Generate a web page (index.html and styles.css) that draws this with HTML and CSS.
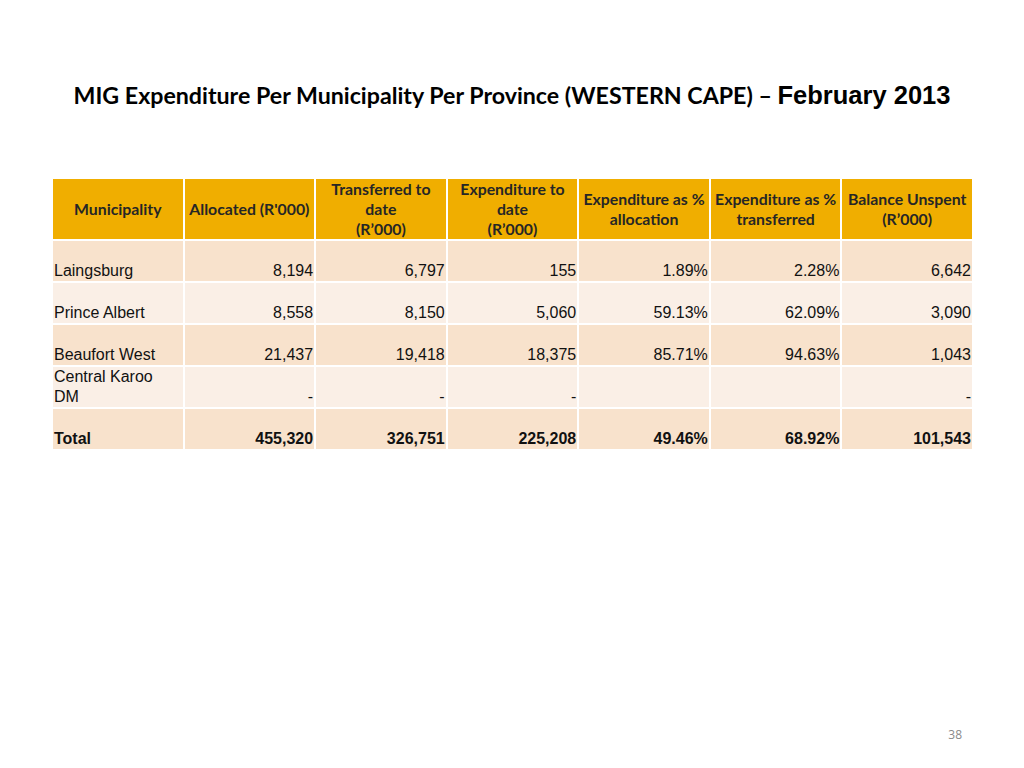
FILE: index.html
```html
<!DOCTYPE html>
<html>
<head>
<meta charset="utf-8">
<link rel="stylesheet" href="styles.css">
</head>
<body>
<div class="slide">
  <h1 class="title"><span class="t-main">MIG Expenditure Per Municipality Per Province (WESTERN CAPE) – </span><span class="t-date">February 2013</span></h1>
  <table class="data">
    <thead>
      <tr>
        <th>Municipality</th>
        <th>Allocated (R'000)</th>
        <th>Transferred to date<br>(R’000)</th>
        <th>Expenditure to date<br>(R’000)</th>
        <th>Expenditure as % allocation</th>
        <th>Expenditure as % transferred</th>
        <th>Balance Unspent (R’000)</th>
      </tr>
    </thead>
    <tbody>
      <tr class="odd">
        <td class="name">Laingsburg</td><td>8,194</td><td>6,797</td><td>155</td><td>1.89%</td><td>2.28%</td><td>6,642</td>
      </tr>
      <tr class="even">
        <td class="name">Prince Albert</td><td>8,558</td><td>8,150</td><td>5,060</td><td>59.13%</td><td>62.09%</td><td>3,090</td>
      </tr>
      <tr class="odd">
        <td class="name">Beaufort West</td><td>21,437</td><td>19,418</td><td>18,375</td><td>85.71%</td><td>94.63%</td><td>1,043</td>
      </tr>
      <tr class="even">
        <td class="name">Central Karoo<br>DM</td><td>-</td><td>-</td><td>-</td><td></td><td></td><td>-</td>
      </tr>
      <tr class="odd total">
        <td class="name">Total</td><td>455,320</td><td>326,751</td><td>225,208</td><td>49.46%</td><td>68.92%</td><td>101,543</td>
      </tr>
    </tbody>
  </table>
  <div class="page-num">38</div>
</div>
</body>
</html>
```

FILE: styles.css
```css
html, body {
  margin: 0;
  padding: 0;
  background: #ffffff;
}
.slide {
  width: 1024px;
  height: 768px;
  position: relative;
  box-sizing: border-box;
  padding: 76px 51px 0 51px;
}
.title {
  margin: 0;
  text-align: center;
  font-weight: bold;
  line-height: 34px;
  color: #000;
  white-space: nowrap;
}
.t-main {
  font-family: "Lato", "Open Sans", sans-serif;
  font-size: 23.2px;
}
.t-date {
  font-family: "Liberation Sans", Arial, sans-serif;
  font-size: 25.5px;
}
.data {
  margin-top: 65px;
  width: 923px;
  border-collapse: collapse;
  table-layout: fixed;
}
.data th, .data td {
  border: 2px solid #ffffff;
  padding: 0 1px;
}
.data th {
  background: #f0ae00;
  color: #262626;
  font-family: "Lato", "Open Sans", sans-serif;
  font-weight: bold;
  font-size: 15.8px;
  line-height: 20px;
  height: 60px;
  padding: 0 1px;
  text-align: center;
  vertical-align: middle;
}
.data td {
  font-family: "Liberation Sans", Arial, sans-serif;
  font-size: 16px;
  line-height: 20px;
  color: #111;
  height: 40px;
  text-align: right;
  vertical-align: bottom;
  padding-bottom: 0;
}
.data td.name {
  text-align: left;
}
.data tr.odd td {
  background: #f8e2cc;
}
.data tr.even td {
  background: #faefe6;
}
.data tr.total td {
  font-weight: bold;
}
.page-num {
  position: absolute;
  right: 62px;
  top: 726px;
  font-family: "Open Sans", sans-serif;
  font-size: 12px;
  color: #8a8a8a;
}
```
